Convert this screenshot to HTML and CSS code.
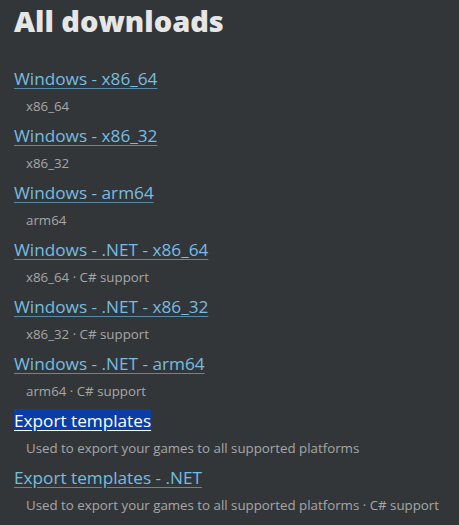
FILE: index.html
```html
<!DOCTYPE html>
<html lang="en">
<head>
    <meta charset="UTF-8">
    <meta name="viewport" content="width=device-width, initial-scale=1.0">
    <title>All downloads</title>
    <link rel="stylesheet" href="styles.css">
</head>
<body>
    <h1 class="title">All downloads</h1>
    <ul class="downloads">
        <li class="download">
            <a class="download-link" href="#">Windows - x86_64</a>
            <p class="download-info">x86_64</p>
        </li>
        <li class="download">
            <a class="download-link" href="#">Windows - x86_32</a>
            <p class="download-info">x86_32</p>
        </li>
        <li class="download">
            <a class="download-link" href="#">Windows - arm64</a>
            <p class="download-info">arm64</p>
        </li>
        <li class="download">
            <a class="download-link" href="#">Windows - .NET - x86_64</a>
            <p class="download-info">x86_64 · C# support</p>
        </li>
        <li class="download">
            <a class="download-link" href="#">Windows - .NET - x86_32</a>
            <p class="download-info">x86_32 · C# support</p>
        </li>
        <li class="download">
            <a class="download-link" href="#">Windows - .NET - arm64</a>
            <p class="download-info">arm64 · C# support</p>
        </li>
        <li class="download">
            <a class="download-link selected" href="#">Export templates</a>
            <p class="download-info">Used to export your games to all supported platforms</p>
        </li>
        <li class="download">
            <a class="download-link" href="#">Export templates - .NET</a>
            <p class="download-info">Used to export your games to all supported platforms · C# support</p>
        </li>
    </ul>
</body>
</html>
```

FILE: styles.css
```css
body {
    margin: 0;
    padding: 0 14px;
    background-color: #333639;
    font-family: "Open Sans", "Noto Sans", sans-serif;
    color: #a6a6a6;
}
.title {
    margin: 0;
    padding-top: 2px;
    font-size: 29px;
    font-weight: 800;
    line-height: 38px;
    color: #e6e6e6;
}
.downloads {
    list-style: none;
    margin: 26px 0 0 0;
    padding: 0;
}
.download {
    height: 57px;
}
.download-link {
    font-size: 17.2px;
    line-height: 26px;
    color: #76bde0;
    text-decoration: underline;
    text-decoration-color: #5b8aa3;
    text-underline-offset: 3px;
}
.download-link.selected {
    background-color: #0a3da8;
    color: #ffffff;
    text-decoration-color: #ffffff;
}
.download-info {
    margin: 4px 0 0 12px;
    font-size: 13.3px;
    line-height: 20px;
}
```
